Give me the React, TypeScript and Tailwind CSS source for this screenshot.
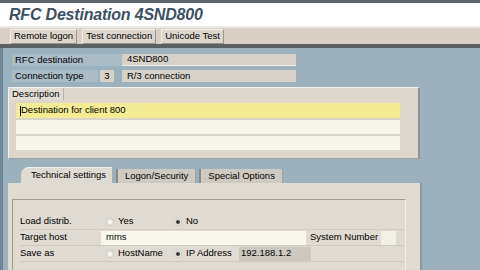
import { ReactNode } from 'react'

const font = { fontFamily: '"Liberation Sans", Arial, sans-serif' }

function ToolButton({ label }: { label: string }) {
  return (
    <div className="h-[15px] px-[3px] flex items-center border border-t-[#f2eee8] border-l-[#f2eee8] border-r-[#9a948c] border-b-[#9a948c] bg-[#ddd6cc] text-[9.5px] text-black leading-none">
      {label}
    </div>
  )
}

function Radio({ checked, label }: { checked?: boolean; label: string }) {
  return (
    <div className="flex items-center gap-[4px] text-black">
      <div className="w-[8px] h-[8px] rounded-full bg-[#f4f2ec] border border-[#c9c4bb] flex items-center justify-center">
        {checked && <div className="w-[4px] h-[4px] rounded-full bg-[#333]" />}
      </div>
      {label}
    </div>
  )
}

function Row({ children }: { children: ReactNode }) {
  return <div className="h-[16px] shrink-0 flex items-center border-b border-[#cfc9bf]">{children}</div>
}

export default function App() {
  return (
    <div className="w-[480px] h-[270px] overflow-hidden bg-[#9bb1bd] flex flex-col" style={font}>
      <div className="h-[3px] shrink-0 bg-[#5f6468]" />
      {/* title */}
      <div className="h-[23px] shrink-0 bg-white flex items-center pl-[9px]">
        <span className="text-[16px] italic font-bold text-[#3d4f63] tracking-[-0.2px]">RFC Destination 4SND800</span>
      </div>
      <div className="h-[2px] shrink-0 bg-[#eeebe4]" />
      {/* toolbar */}
      <div className="h-[16px] shrink-0 bg-[#d9cfc4] flex items-center gap-[5px] pl-[10px]">
        <ToolButton label="Remote logon" />
        <ToolButton label="Test connection" />
        <ToolButton label="Unicode Test" />
      </div>
      <div className="h-[4px] shrink-0 bg-[#5a6064]" />

      <div className="flex-1 min-h-0 flex border-l-[3px] border-[#6f8795] pl-[5px] text-[9.5px]">
        <div className="flex-1 flex flex-col">
          {/* header fields */}
          <div className="mt-[6px] ml-[4px] shrink-0 flex flex-col gap-[4px] text-black">
            <div className="flex h-[12px]">
              <div className="w-[110px] bg-[#aabcc6] pl-[3px] flex items-center">RFC destination</div>
              <div className="w-[174px] bg-[#d6d2ca] border-b border-[#eeeae4] pl-[5px] flex items-center">4SND800</div>
            </div>
            <div className="flex h-[12px]">
              <div className="w-[86px] bg-[#aabcc6] pl-[3px] flex items-center">Connection type</div>
              <div className="w-[14px] ml-[2px] bg-[#d6d2ca] flex items-center justify-center">3</div>
              <div className="w-[8px]" />
              <div className="w-[174px] bg-[#d6d2ca] pl-[5px] flex items-center">R/3 connection</div>
            </div>
          </div>

          {/* description group */}
          <div className="mt-[5px] shrink-0 w-[412px] h-[72px] bg-[#ddd6cc] border-t border-l border-[#f4f1ec] border-r-2 border-r-[#8e959a] border-b border-b-[#9aa0a4] flex flex-col">
            <div className="h-[12px] flex">
              <div className="px-[3px] text-black bg-[#e2ddd4] border-r border-[#b8b2a8] flex items-center">Description</div>
            </div>
            <div className="mt-[3px] ml-[7px] w-[384px] flex flex-col gap-[1px]">
              <div className="h-[15px] bg-[#f3ec94] pl-[4px] flex items-center text-black">
                <span className="w-[1px] h-[10px] bg-black" />Destination for client 800
              </div>
              <div className="h-[15px] bg-[#f7f6ec] border-t border-[#d8d3c8]" />
              <div className="h-[15px] bg-[#f7f6ec] border-t border-[#d8d3c8]" />
            </div>
          </div>

          {/* tabs */}
          <div className="mt-[8px] shrink-0 h-[16px] flex items-end pl-[13px] text-black">
            <div className="h-[16px] pl-[10px] pr-[6px] bg-[#dfdad2] rounded-tl-[8px] flex items-center border-t border-[#f2efe9]">Technical settings</div>
            <div className="h-[14px] ml-[4px] px-[7px] bg-[#cfcac1] flex items-center border-l-2 border-[#8a8a8a] border-r border-r-[#a6a29a]">Logon/Security</div>
            <div className="h-[14px] ml-[3px] px-[7px] bg-[#cfcac1] flex items-center border-l-2 border-[#8a8a8a] border-r border-r-[#a6a29a]">Special Options</div>
          </div>
          <div className="w-[414px] shrink-0 h-[100px] bg-[#dfdad2] border-r-2 border-[#8e959a] pt-[16px] pl-[4px]">
            <div className="w-[394px] h-[80px] border-t border-l border-[#9f9a92] border-r border-r-[#f4f1ec] pt-[14px] pl-[7px] text-black">
              <Row>
                <div className="w-[86px]">Load distrib.</div>
                <div className="w-[68px]"><Radio label="Yes" /></div>
                <Radio checked label="No" />
              </Row>
              <Row>
                <div className="w-[81px]">Target host</div>
                <div className="w-[205px] h-[14px] bg-[#f8f7ee] pl-[5px] flex items-center">mms</div>
                <div className="ml-[4px] w-[71px]">System Number</div>
                <div className="w-[15px] h-[14px] bg-[#f1efe6]" />
              </Row>
              <Row>
                <div className="w-[86px]">Save as</div>
                <div className="w-[68px]"><Radio label="HostName" /></div>
                <div className="w-[65px]"><Radio checked label="IP Address" /></div>
                <div className="w-[72px] h-[14px] bg-[#cdc9c1] pl-[2px] flex items-center">192.188.1.2</div>
              </Row>
            </div>
          </div>
        </div>
      </div>
    </div>
  )
}
